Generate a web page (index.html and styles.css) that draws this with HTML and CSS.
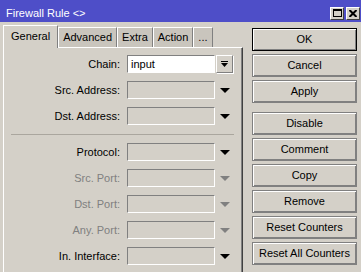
FILE: index.html
```html
<!DOCTYPE html>
<html lang="en">
<head>
    <meta charset="UTF-8">
    <meta name="viewport" content="width=device-width, initial-scale=1.0">
    <title>Firewall Rule</title>
    <link rel="stylesheet" href="styles.css">
</head>
<body>
<div class="window">
    <div class="titlebar">
        <span class="title">Firewall Rule &lt;&gt;</span>
        <div class="tbtns">
            <span class="tbtn"><svg width="9" height="8" viewBox="0 0 9 8"><rect x="0.5" y="0.5" width="8" height="7" fill="none" stroke="#000"/><rect x="0" y="0" width="9" height="2" fill="#000"/></svg></span>
            <span class="tbtn"><svg width="8" height="7" viewBox="0 0 8 7"><path d="M0.5 0 L7.5 7 M7.5 0 L0.5 7" stroke="#000" stroke-width="2" fill="none"/></svg></span>
        </div>
    </div>

    <div class="main">
        <div class="left">
            <div class="tabs">
                <span class="tab on">General</span>
                <span class="tab">Advanced</span>
                <span class="tab">Extra</span>
                <span class="tab">Action</span>
                <span class="tab">...</span>
            </div>
            <div class="panel">
                <div class="row">
                    <label class="lbl">Chain:</label>
                    <div class="field white">input</div>
                    <span class="dd"><svg width="7" height="7" viewBox="0 0 7 7"><rect x="0" y="0" width="7" height="1" fill="#000"/><polygon points="0,2 7,2 3.5,6" fill="#000"/></svg></span>
                </div>
                <div class="row">
                    <label class="lbl">Src. Address:</label>
                    <div class="field"></div>
                    <span class="arrow"><svg width="10" height="5" viewBox="0 0 10 5"><polygon points="0,0 10,0 5,5"/></svg></span>
                </div>
                <div class="row">
                    <label class="lbl">Dst. Address:</label>
                    <div class="field"></div>
                    <span class="arrow"><svg width="10" height="5" viewBox="0 0 10 5"><polygon points="0,0 10,0 5,5"/></svg></span>
                </div>

                <div class="sep"></div>

                <div class="row">
                    <label class="lbl">Protocol:</label>
                    <div class="field"></div>
                    <span class="arrow"><svg width="10" height="5" viewBox="0 0 10 5"><polygon points="0,0 10,0 5,5"/></svg></span>
                </div>
                <div class="row off">
                    <label class="lbl">Src. Port:</label>
                    <div class="field"></div>
                    <span class="arrow"><svg width="10" height="5" viewBox="0 0 10 5"><polygon points="0,0 10,0 5,5"/></svg></span>
                </div>
                <div class="row off">
                    <label class="lbl">Dst. Port:</label>
                    <div class="field"></div>
                    <span class="arrow"><svg width="10" height="5" viewBox="0 0 10 5"><polygon points="0,0 10,0 5,5"/></svg></span>
                </div>
                <div class="row off">
                    <label class="lbl">Any. Port:</label>
                    <div class="field"></div>
                    <span class="arrow"><svg width="10" height="5" viewBox="0 0 10 5"><polygon points="0,0 10,0 5,5"/></svg></span>
                </div>
                <div class="row">
                    <label class="lbl">In. Interface:</label>
                    <div class="field"></div>
                    <span class="arrow"><svg width="10" height="5" viewBox="0 0 10 5"><polygon points="0,0 10,0 5,5"/></svg></span>
                </div>
            </div>
        </div>

        <div class="actions">
            <button class="btn def">OK</button>
            <button class="btn">Cancel</button>
            <button class="btn">Apply</button>
            <button class="btn gap">Disable</button>
            <button class="btn">Comment</button>
            <button class="btn">Copy</button>
            <button class="btn">Remove</button>
            <button class="btn">Reset Counters</button>
            <button class="btn">Reset All Counters</button>
        </div>
    </div>
</div>
</body>
</html>
```

FILE: styles.css
```css
body { margin: 0; font: 11px "Liberation Sans", Arial, sans-serif; background: #d4d0c8; color: #000; }
.window { height: 272px; overflow: hidden; display: flex; flex-direction: column; }

.titlebar { height: 22px; box-sizing: border-box; padding: 4px 1px 0 6px; background: #4e4ec8; color: #fff; display: flex; align-items: center; justify-content: space-between; }
.title { font-size: 11px; }
.tbtns { display: flex; gap: 2px; }
.tbtn { width: 14px; height: 13px; box-sizing: border-box; background: #d4d0c8; border: 1px solid; border-color: #fff #404040 #404040 #fff; display: flex; align-items: center; justify-content: center; }

.main { display: flex; flex: 1; min-height: 0; }
.left { width: 240px; margin-left: 3px; padding-top: 3px; display: flex; flex-direction: column; }

.tabs { display: flex; align-items: flex-end; height: 23px; margin-bottom: -1px; position: relative; z-index: 1; }
.tab { height: 20px; box-sizing: border-box; padding: 0 4px; margin-bottom: 1px; line-height: 19px; background: #c9c5bd; border-left: 1px solid #fff; border-top: 1px solid #fff; border-right: 1px solid #808080; }
.tab.on { height: 23px; margin-bottom: 0; padding: 0 7px; line-height: 20px; background: #d4d0c8; }

.panel { flex: 1; display: flex; flex-direction: column; gap: 8px; padding: 7px 8px 0 0; border-top: 1px solid #fff; border-left: 1px solid #fff; border-right: 1px solid #404040; box-shadow: inset -1px 0 #808080; }

.row { display: flex; align-items: center; height: 18px; }
.lbl { width: 116px; margin-right: 7px; text-align: right; white-space: nowrap; }
.field { width: 88px; height: 18px; box-sizing: border-box; padding-left: 3px; line-height: 16px; border: 1px solid; border-color: #808080 #fff #fff #808080; }
.field.white { background: #fff; }
.dd { width: 17px; height: 18px; box-sizing: border-box; margin-left: 1px; display: flex; align-items: center; justify-content: center; border: 1px solid; border-color: #fff #808080 #808080 #fff; box-shadow: 1px 1px #fff; }
.arrow { width: 17px; margin-left: 1px; display: flex; justify-content: center; }
.arrow svg { fill: #000; }
.row.off .lbl { color: #808080; }
.row.off .arrow svg { fill: #808080; }

.sep { margin: 1px 0 0 7px; border-top: 1px solid #aaa69e; }

.actions { width: 105px; margin-left: 9px; padding-top: 6px; display: flex; flex-direction: column; gap: 3px; }
.btn { height: 23px; padding: 0; font: inherit; color: #000; background: #d4d0c8; border: 1px solid #808080; box-shadow: inset 1px 1px #fff, inset -1px -1px #808080; text-align: center; line-height: 21px; }
.btn.def { border-color: #000; }
.btn.gap { margin-top: 6px; }
```
